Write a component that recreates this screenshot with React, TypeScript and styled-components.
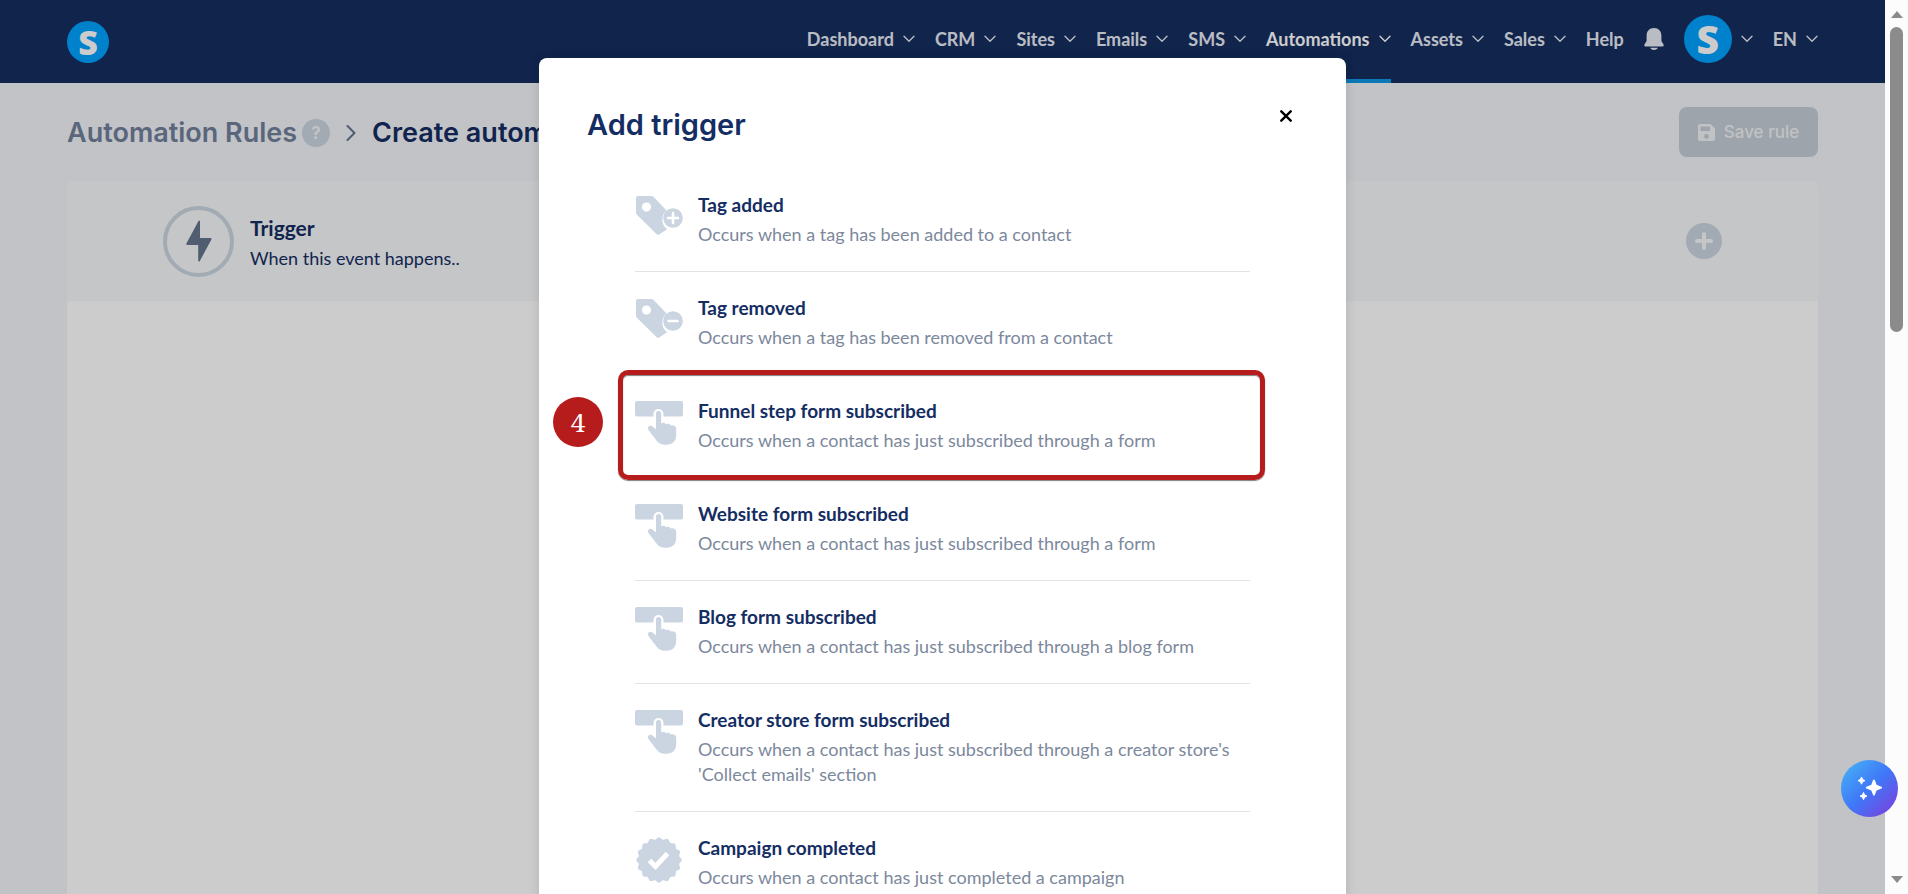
import React from "react";
import styled, { createGlobalStyle, css } from "styled-components";

const GlobalStyle = createGlobalStyle`
  *, *::before, *::after { box-sizing: border-box; }
  html, body, #root { height: 100%; }
  body {
    margin: 0;
    overflow: hidden;
    background: #f2f4f9;
    color: #142d63;
    font-family: Lato, "Open Sans", sans-serif;
    font-size: 18px;
    line-height: 24px;
  }
  h1, h2, h3, p, ul, ol { margin: 0; padding: 0; list-style: none; }
  button { font: inherit; color: inherit; border: 0; padding: 0; background: none; cursor: pointer; }
  a { color: inherit; text-decoration: none; }
`;

const headingFont = css`
  font-family: Inter, "Liberation Sans", sans-serif;
  font-weight: 600;
`;

const Window = styled.div`
  display: flex;
  height: 100vh;
`;

const Viewport = styled.div`
  position: relative;
  flex: 1;
  min-width: 0;
  display: flex;
  flex-direction: column;
  overflow: hidden;
`;

const ScrollTrack = styled.div`
  width: 23px;
  padding: 11px 5px;
  display: flex;
  flex-direction: column;
  align-items: center;
  background: #fcfcfc;
`;

const ScrollThumb = styled.div`
  width: 13px;
  height: 35%;
  margin: 9px 0 auto;
  border-radius: 7px;
  background: #8b8b8b;
`;

const NavBar = styled.header`
  display: flex;
  justify-content: space-between;
  align-items: center;
  height: 83px;
  padding: 0 67px;
  background: #152d60;
  color: #e8ecf4;
`;

const Logo = styled.span<{ $size: number; $font: number }>`
  display: flex;
  align-items: center;
  justify-content: center;
  width: ${(p) => p.$size}px;
  height: ${(p) => p.$size}px;
  border-radius: 50%;
  background: #00a2ff;
  color: #fff;
  font: 800 ${(p) => p.$font}px/1 "Open Sans", sans-serif;
`;

const NavList = styled.ul`
  display: flex;
  align-items: stretch;
  gap: 20px;
  height: 83px;
  font-weight: 700;
`;

const NavLink = styled.a<{ $active?: boolean }>`
  display: flex;
  align-items: center;
  gap: 9px;
  height: 100%;
  padding-bottom: 2px;
  border-bottom: 4px solid ${(p) => (p.$active ? "#0f97e6" : "transparent")};
  color: ${(p) => (p.$active ? "#fff" : "inherit")};
  svg { flex: none; }
`;

const PageHead = styled.div`
  display: flex;
  align-items: center;
  justify-content: space-between;
  padding: 24px 67px;
`;

const Crumbs = styled.nav`
  display: flex;
  align-items: center;
  padding-top: 2px;
  ${headingFont}
  font-size: 27px;
  line-height: 32px;
`;

const CrumbLink = styled.a`
  color: #71809a;
`;

const HelpButton = styled.button`
  width: 28px;
  height: 28px;
  margin: 0 16px 0 5px;
  border-radius: 50%;
  background: #cbd5e1;
  color: #f2f4f9;
  font-size: 17px;
  font-weight: 700;
  line-height: 28px;
`;

const CrumbTitle = styled.h1`
  margin-left: 16px;
  white-space: nowrap;
  font: inherit;
`;

const SaveButton = styled.button`
  display: flex;
  align-items: center;
  justify-content: center;
  gap: 9px;
  width: 139px;
  height: 50px;
  border-radius: 8px;
  background: #c6ced6;
  color: #f1f3f6;
  font-weight: 500;
  font-family: Inter, sans-serif;
  font-size: 17px;
`;

const Card = styled.main`
  flex: 1;
  margin: 0 67px;
  border-radius: 8px 8px 0 0;
  background: #fff;
  overflow: hidden;
`;

const CardHead = styled.div`
  display: flex;
  align-items: center;
  height: 120px;
  padding: 0 96px;
  background: #f7f8fa;
`;

const BoltRing = styled.span`
  display: flex;
  align-items: center;
  justify-content: center;
  width: 71px;
  height: 71px;
  margin-right: 16px;
  border: 4px solid #cbd5e1;
  border-radius: 50%;
`;

const TriggerText = styled.div`
  flex: 1;
  padding-top: 3px;
  h2 { font-size: 21px; font-weight: 700; line-height: 24px; margin-bottom: 6px; }
`;

const AddButton = styled.button`
  display: flex;
  align-items: center;
  justify-content: center;
  width: 36px;
  height: 36px;
  border-radius: 50%;
  background: #cbd5e1;
`;

const Overlay = styled.div`
  position: absolute;
  inset: 0;
  display: flex;
  justify-content: center;
  align-items: flex-start;
  padding-top: 58px;
  background: rgba(0, 0, 0, 0.2);
`;

const Dialog = styled.section`
  width: 807px;
  max-width: 90%;
  padding: 46px 48px 48px;
  border-radius: 8px;
  background: #fff;
  box-shadow: 0 0 12px rgba(0, 0, 0, 0.12);
`;

const DialogHead = styled.div`
  display: flex;
  justify-content: space-between;
  align-items: flex-start;
  height: 65px;
  h2 {
    ${headingFont}
    font-size: 29px;
    line-height: 42px;
  }
`;

const CloseButton = styled.button`
  display: flex;
  align-items: center;
  justify-content: center;
  width: 24px;
  height: 24px;
`;

const TriggerList = styled.ul`
  padding: 0 48px;
`;

const TriggerItem = styled.li`
  position: relative;
  border-bottom: 1px solid #dfe3e8;
`;

const TriggerButton = styled.button`
  display: flex;
  align-items: flex-start;
  gap: 15px;
  width: 100%;
  padding: 24px 0;
  text-align: left;
  > svg { flex: none; }
`;

const TriggerCopy = styled.span`
  display: flex;
  flex-direction: column;
  gap: 5px;
`;

const TriggerName = styled.strong`
  font-size: 19px;
  line-height: 24px;
  font-weight: 700;
`;

const TriggerNote = styled.span`
  color: #7c889c;
  line-height: 25px;
`;

const Highlight = styled.div`
  position: absolute;
  inset: -5px -15px -3px -17px;
  border: 5px solid #b71c1c;
  border-radius: 10px;
  box-shadow: 0 1px 1px rgba(0, 0, 0, 0.5), inset 0 1px 1px rgba(0, 0, 0, 0.5);
  pointer-events: none;
`;

const StepBadge = styled.span`
  position: absolute;
  top: 22px;
  left: -82px;
  width: 50px;
  height: 50px;
  border-radius: 50%;
  background: #b71c1c;
  color: #fff;
  font: 26px/50px "Noto Serif", "DejaVu Serif", serif;
  text-align: center;
`;

const AssistantButton = styled.button`
  position: fixed;
  right: 10px;
  bottom: 77px;
  display: flex;
  align-items: center;
  justify-content: center;
  width: 57px;
  height: 57px;
  border-radius: 50%;
  background: linear-gradient(135deg, #45aaf5 10%, #3f78f8 50%, #7c3fdc 95%);
`;

const FILL = "#cbd5e1";

const ChevronDown = () => (
  <svg width="12" height="8" viewBox="0 0 12 8" fill="none" stroke="currentColor" strokeWidth="1.4">
    <path d="M1 1.2 6 6.2 11 1.2" strokeLinecap="round" strokeLinejoin="round" />
  </svg>
);

const BellIcon = () => (
  <svg width="20" height="22" viewBox="0 0 20 22" fill="currentColor">
    <path d="M10 0C5.400 0 2.600 3.200 2.600 7.500V13L.6 16.200C-.1 17.400.5 18.500 1.800 18.500h16.400c1.300 0 1.900-1.100 1.200-2.300L17.400 13V7.500C17.400 3.200 14.600 0 10 0Z" />
    <path d="M6.300 19.800h7.400c-.3 1.300-1.500 2.200-3.700 2.200s-3.400-.9-3.700-2.200Z" />
  </svg>
);

const TagIcon = ({ removed }: { removed?: boolean }) => (
  <svg width="48" height="48" viewBox="0 0 48 48" fill={FILL}>
    <path
      fillRule="evenodd"
      d="M3 3h13c1 0 2 .4 2.700 1.100L31.500 17.500a12 12 0 0 0 .6 18.700L24.500 41.300c-.8.8-2 .8-2.800 0L2.100 22A3.600 3.600 0 0 1 1 19.400V5a2 2 0 0 1 2-2ZM11.500 9.500a4.600 4.600 0 1 0 0 9.200 4.600 4.600 0 0 0 0-9.200Z"
    />
    <circle cx="38" cy="25" r="9.800" />
    <path
      d={removed ? "M33.500 25h9" : "M33 25h10M38 20v10"}
      stroke="#fff"
      strokeWidth="2.600"
      strokeLinecap="round"
    />
  </svg>
);

const PressIcon = () => (
  <svg width="48" height="48" viewBox="0 0 48 48" fill={FILL}>
    <path d="M2 2h44a2 2 0 0 1 2 2v11.500a2 2 0 0 1-2 2H28.500V15a5 5 0 0 0-10 0v2.500H2a2 2 0 0 1-2-2V4a2 2 0 0 1 2-2Z" />
    <path d="M21 14.500a2.600 2.600 0 0 1 5.200 0v10c1.200-1.400 4-1 4.900.8 1.500-1 3.800-.5 4.600 1.200 2.600-.9 5.500.4 5.500 3.200v6.300c0 6-3.800 9.800-9.700 9.800h-1.500c-3.500 0-6.300-1.300-8.500-4.200l-7.800-10.400c-2.200-3.200 1.400-5.800 4.100-3.500l3.200 2.900Z" />
  </svg>
);

const sealPoints = Array.from({ length: 144 }, (_, i) => {
  const angle = (i / 144) * Math.PI * 2;
  const radius = 21.7 + 1.1 * Math.cos(angle * 16);
  return `${(24 + radius * Math.sin(angle)).toFixed(2)},${(24 - radius * Math.cos(angle)).toFixed(2)}`;
}).join(" ");

const SealIcon = () => (
  <svg width="48" height="48" viewBox="0 0 48 48" fill={FILL}>
    <polygon points={sealPoints} />
    <path d="m14.500 24.500 6 6 12-13" fill="none" stroke="#fff" strokeWidth="5" />
  </svg>
);

const navItems = ["Dashboard", "CRM", "Sites", "Emails", "SMS", "Automations", "Assets", "Sales"];

const triggers: { name: string; note: string; icon: React.ReactNode; step?: number }[] = [
  { name: "Tag added", note: "Occurs when a tag has been added to a contact", icon: <TagIcon /> },
  { name: "Tag removed", note: "Occurs when a tag has been removed from a contact", icon: <TagIcon removed /> },
  {
    name: "Funnel step form subscribed",
    note: "Occurs when a contact has just subscribed through a form",
    icon: <PressIcon />,
    step: 4,
  },
  { name: "Website form subscribed", note: "Occurs when a contact has just subscribed through a form", icon: <PressIcon /> },
  { name: "Blog form subscribed", note: "Occurs when a contact has just subscribed through a blog form", icon: <PressIcon /> },
  {
    name: "Creator store form subscribed",
    note: "Occurs when a contact has just subscribed through a creator store's 'Collect emails' section",
    icon: <PressIcon />,
  },
  { name: "Campaign completed", note: "Occurs when a contact has just completed a campaign", icon: <SealIcon /> },
];

export default function App() {
  return (
    <>
      <GlobalStyle />
      <Window>
        <Viewport>
          <NavBar>
            <a href="#home" aria-label="Home">
              <Logo $size={42} $font={34}>S</Logo>
            </a>
            <NavList>
              {navItems.map((label) => (
                <li key={label}>
                  <NavLink href={`#${label.toLowerCase()}`} $active={label === "Automations"}>
                    {label}
                    <ChevronDown />
                  </NavLink>
                </li>
              ))}
              <li>
                <NavLink href="#help">Help</NavLink>
              </li>
              <li>
                <NavLink href="#notifications" aria-label="Notifications">
                  <BellIcon />
                </NavLink>
              </li>
              <li>
                <NavLink href="#account" aria-label="Account">
                  <Logo $size={48} $font={39}>S</Logo>
                  <ChevronDown />
                </NavLink>
              </li>
              <li>
                <NavLink href="#language">
                  EN
                  <ChevronDown />
                </NavLink>
              </li>
            </NavList>
          </NavBar>

          <PageHead>
            <Crumbs aria-label="Breadcrumb">
              <CrumbLink href="#rules">Automation Rules</CrumbLink>
              <HelpButton aria-label="Help">?</HelpButton>
              <svg width="10" height="16" viewBox="0 0 10 16" fill="none" stroke="#64748b" strokeWidth="2">
                <path d="m1.500 1 7 7-7 7" strokeLinecap="round" strokeLinejoin="round" />
              </svg>
              <CrumbTitle>Create automation</CrumbTitle>
            </Crumbs>
            <SaveButton>
              <svg width="17" height="17" viewBox="0 0 17 17" fill="currentColor">
                <path
                  fillRule="evenodd"
                  d="M2 0h10.500L17 4.500V15a2 2 0 0 1-2 2H2a2 2 0 0 1-2-2V2a2 2 0 0 1 2-2Zm.5 2.500V7h9.500V2.500ZM8.500 10a2.400 2.400 0 1 0 0 4.800 2.400 2.400 0 0 0 0-4.800Z"
                />
              </svg>
              Save rule
            </SaveButton>
          </PageHead>

          <Card>
            <CardHead>
              <BoltRing>
                <svg width="26" height="42" viewBox="0 0 26 42" fill="#64748b">
                  <path d="M12.500 1c.6-1 1.500-.7 1.500.4V18h10.500c1 0 1.300.8.9 1.600L13.800 41c-.5 1-1.600.7-1.600-.4V25H1.300C.3 25 0 24.200.4 23.400Z" />
                </svg>
              </BoltRing>
              <TriggerText>
                <h2>Trigger</h2>
                <p>When this event happens..</p>
              </TriggerText>
              <AddButton aria-label="Add trigger">
                <svg width="18" height="18" viewBox="0 0 18 18" stroke="#f7f8fa" strokeWidth="4" strokeLinecap="round">
                  <path d="M2 9h14M9 2v14" />
                </svg>
              </AddButton>
            </CardHead>
          </Card>

          <Overlay>
            <Dialog role="dialog" aria-modal="true" aria-labelledby="dialog-title">
              <DialogHead>
                <h2 id="dialog-title">Add trigger</h2>
                <CloseButton aria-label="Close">
                  <svg width="12" height="12" viewBox="0 0 12 12" stroke="#000" strokeWidth="2.400" strokeLinecap="round">
                    <path d="m1.300 1.300 9.400 9.400M10.700 1.300l-9.400 9.400" />
                  </svg>
                </CloseButton>
              </DialogHead>
              <TriggerList>
                {triggers.map((t) => (
                  <TriggerItem key={t.name}>
                    <TriggerButton>
                      {t.icon}
                      <TriggerCopy>
                        <TriggerName>{t.name}</TriggerName>
                        <TriggerNote>{t.note}</TriggerNote>
                      </TriggerCopy>
                    </TriggerButton>
                    {t.step && (
                      <>
                        <Highlight />
                        <StepBadge>{t.step}</StepBadge>
                      </>
                    )}
                  </TriggerItem>
                ))}
              </TriggerList>
            </Dialog>
          </Overlay>
        </Viewport>

        <ScrollTrack aria-hidden="true">
          <svg width="12" height="7" viewBox="0 0 12 7" fill="#8b8b8b">
            <path d="M6 0 12 7H0Z" />
          </svg>
          <ScrollThumb />
          <svg width="12" height="7" viewBox="0 0 12 7" fill="#8b8b8b">
            <path d="M6 7 0 0h12Z" />
          </svg>
        </ScrollTrack>
      </Window>

      <AssistantButton aria-label="Assistant">
        <svg width="26" height="26" viewBox="0 0 26 26" fill="#fff">
          <path d="M17 3.500c.4 0 .7.200.8.600l1.800 4.700 4.800 1.900c.9.300.9 1.500 0 1.800l-4.800 1.900-1.800 4.700c-.3.800-1.400.8-1.700 0l-1.800-4.700-4.800-1.900c-.9-.3-.9-1.500 0-1.800l4.800-1.900 1.800-4.700c.2-.4.5-.6.900-.6Z" />
          <path d="m4.500 1 1.100 2.500L8 4.600 5.600 5.700 4.500 8.200 3.400 5.700 1 4.600l2.400-1.100ZM6.500 16.500l1.100 2.500 2.400 1.100-2.400 1.100-1.100 2.500-1.100-2.500L3 20.100 5.400 19Z" stroke="#fff" strokeLinejoin="round" />
        </svg>
      </AssistantButton>
    </>
  );
}
